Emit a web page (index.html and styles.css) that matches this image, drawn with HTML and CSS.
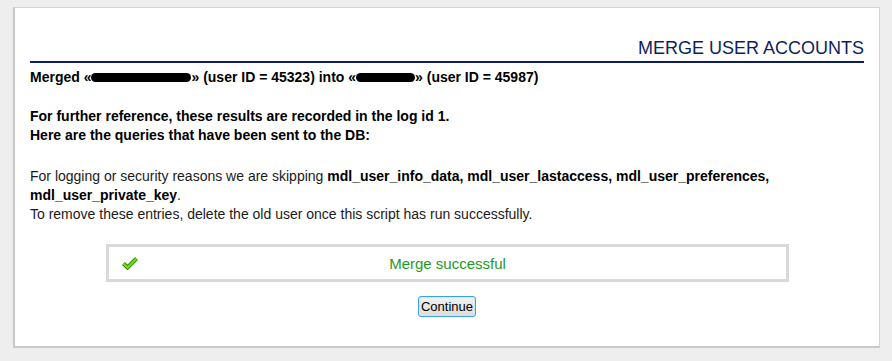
FILE: index.html
```html
<!DOCTYPE html>
<html>

<head>
  <title>Merge user accounts</title>

  <link rel="stylesheet" href="styles.css">
</head>

<body>
  <div class="page">
    <div class="card">
      <h2 class="title">MERGE USER ACCOUNTS</h2>

      <p class="merged">
        Merged «<span class="redact redact-long"></span>» (user ID = 45323) into «<span class="redact redact-short"></span>» (user ID = 45987)
      </p>

      <p class="note">
        For further reference, these results are recorded in the log id 1.<br>
        Here are the queries that have been sent to the DB:
      </p>

      <p class="skip">
        For logging or security reasons we are skipping <b>mdl_user_info_data, mdl_user_lastaccess, mdl_user_preferences,</b><br>
        <b>mdl_user_private_key</b>.<br>
        To remove these entries, delete the old user once this script has run successfully.
      </p>

      <!-- Result box -->
      <div class="result">
        <svg class="check" width="16" height="14" viewBox="0 0 16 14">
          <path d="M1.5 7.5 L5.5 11.5 L14.5 2.5" fill="none" stroke="#2a8a00" stroke-width="4" stroke-linejoin="miter" />
          <path d="M1.5 7.5 L5.5 11.5 L14.5 2.5" fill="none" stroke="#7ae000" stroke-width="2" stroke-linejoin="miter" />
        </svg>
        <span class="result-text">Merge successful</span>
      </div>

      <div class="actions">
        <button class="continue">Continue</button>
      </div>
    </div>
  </div>
</body>

</html>
```

FILE: styles.css
```css
html,
body {
  margin: 0;
  padding: 0;
  background: #EEEEEE;
  font-family: "Liberation Sans", Arial, sans-serif;
  color: #000000;
}

.page {
  padding: 7px 12px 13px 13px;
}

.card {
  height: 341px;
  background: #FFFFFF;
  border: 1px solid #D4D4D4;
  border-left: 2px solid #C8C8C8;
  border-bottom: 2px solid #C8C8C8;
  padding: 0 15px 0 15px;
  box-sizing: border-box;
}

.title {
  margin: 30px 0 0 0;
  padding-bottom: 3px;
  text-align: right;
  font-size: 18px;
  font-weight: normal;
  color: #0F1F5A;
  line-height: 20px;
  border-bottom: 2px solid #0F1F5A;
}

.merged {
  margin: 5px 0 0 0;
  font-size: 14px;
  font-weight: bold;
  line-height: 19px;
}

.redact {
  display: inline-block;
  height: 9px;
  background: #000000;
  border-radius: 5px;
  vertical-align: 0;
}

.redact-long {
  width: 100px;
}

.redact-short {
  width: 59px;
}

.note {
  margin: 20px 0 0 0;
  font-size: 14px;
  font-weight: bold;
  line-height: 19px;
}

.skip {
  margin: 22px 0 0 0;
  font-size: 14px;
  line-height: 19px;
  color: #1A1A1A;
}

.skip b {
  color: #000000;
}

.result {
  margin: 20px 75px 0 76px;
  height: 38px;
  border: 3px solid #D9D9D9;
  box-sizing: border-box;
  display: flex;
  align-items: center;
}

.check {
  margin-left: 13px;
}

.result-text {
  flex: 1;
  text-align: center;
  margin-right: 29px;
  font-size: 15px;
  color: #1E9A1E;
}

.actions {
  display: flex;
  justify-content: center;
  margin-top: 14px;
}

.continue {
  font-family: "Liberation Sans", Arial, sans-serif;
  font-size: 13px;
  padding: 1px 2px;
  height: 21px;
  border: 1px solid #3BA4DC;
  border-radius: 3px;
  background: linear-gradient(#F2F2F2, #DCDCDC);
  box-shadow: inset 0 0 0 1px #C9E8F8;
  color: #000000;
}
```
